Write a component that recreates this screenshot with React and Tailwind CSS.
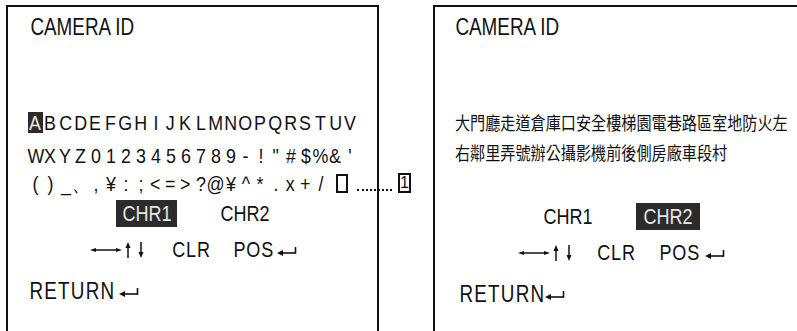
import React from "react";

const ROW1 = "ABCDEFGHIJKLMNOPQRSTUV".split("");
const ROW2 = "WXYZ0123456789-!\"#$%&'".split("");
const ROW3 = ["(", ")", "_", "、", ",", "¥", ":", ";", "<", "=", ">", "?", "@", "¥", "^", "*", ".", "x", "+", "/"];

// OSD font is condensed: squeeze regular Liberation Sans inside a fixed box
const T = ({ w, className = "", children }) => (
  <span className={`${w} flex justify-center shrink-0 ${className}`}>
    <span className="scale-x-[0.82] whitespace-nowrap">{children}</span>
  </span>
);

const Arrows = () => (
  <svg width="56" height="18" viewBox="0 0 56 18" className="shrink-0">
    <line x1="3" y1="9" x2="29" y2="9" stroke="#111" strokeWidth="1.5" />
    <polygon points="0,9 6,7 6,11" fill="#111" />
    <polygon points="32,9 26,7 26,11" fill="#111" />
    <line x1="38" y1="5" x2="38" y2="17" stroke="#111" strokeWidth="1.5" />
    <polygon points="38,1 35.5,7 40.5,7" fill="#111" />
    <line x1="51" y1="1" x2="51" y2="13" stroke="#111" strokeWidth="1.5" />
    <polygon points="51,17 48.5,11 53.5,11" fill="#111" />
  </svg>
);

const Enter = () => (
  <svg width="20" height="12" viewBox="0 0 20 12" className="shrink-0">
    <line x1="4" y1="9" x2="18.5" y2="9" stroke="#111" strokeWidth="1.6" />
    <line x1="18.5" y1="3" x2="18.5" y2="9.8" stroke="#111" strokeWidth="1.6" />
    <polygon points="0,9 6,6 6,12" fill="#111" />
  </svg>
);

const Cell = ({ ch, active }) => (
  <span
    className={
      active
        ? "w-[15px] h-[21px] flex items-center justify-center shrink-0 bg-[#2b2b2b] text-[#e6e6e6]"
        : "w-[15px] h-[21px] flex items-center justify-center shrink-0"
    }
  >
    <span className="scale-x-[0.85]">{ch}</span>
  </span>
);

export default function App() {
  return (
    <div className="w-[797px] h-[331px] overflow-hidden bg-white flex items-start text-[#111] font-['Liberation_Sans',sans-serif]">
      {/* left: latin character set */}
      <section className="ml-[6px] mt-[5px] w-[373px] h-[340px] shrink-0 border-2 border-[#111] flex flex-col">
        <div className="h-[30px] mt-[5px] pl-[22px] flex items-center text-[23px] leading-none">
          <T w="w-[105px]">CAMERA ID</T>
        </div>

        <div className="h-[28px] mt-[66px] pl-[20px] flex items-center text-[21px] leading-none">
          {ROW1.map((c, i) => (
            <Cell key={i} ch={c} active={i === 0} />
          ))}
        </div>
        <div className="h-[28px] mt-[5px] pl-[20px] flex items-center text-[21px] leading-none">
          {ROW2.map((c, i) => (
            <Cell key={i} ch={c} />
          ))}
        </div>
        <div className="h-[28px] pl-[20px] flex items-center text-[21px] leading-none">
          {ROW3.map((c, i) => (
            <Cell key={i} ch={c} />
          ))}
          <span className="ml-[8px] w-[12px] h-[19px] border-2 border-[#111] shrink-0" />
          <span className="ml-[9px] w-[35px] self-end mb-[6px] border-b-2 border-dotted border-[#111] shrink-0" />
          <span className="ml-[6px] w-[13px] h-[20px] border-2 border-[#111] shrink-0 flex items-center justify-center text-[16px]">1</span>
        </div>

        <div className="h-[27px] mt-[3px] pl-[108px] flex items-center text-[22px] leading-none">
          <T w="w-[61px] h-[27px] items-center bg-[#2b2b2b] text-[#e6e6e6]">CHR1</T>
          <T w="w-[51px] ml-[42px]">CHR2</T>
        </div>

        <div className="h-[28px] mt-[9px] pl-[82px] flex items-center text-[22px] leading-none tracking-[1px]">
          <Arrows />
          <T w="w-[38px] ml-[26px]">CLR</T>
          <T w="w-[43px] ml-[22px]">POS</T>
          <span className="ml-[2px] flex"><Enter /></span>
        </div>

        <div className="h-[28px] mt-[13px] pl-[24px] flex items-center text-[23px] leading-none tracking-[1.5px]">
          <T w="w-[81px]">RETURN</T>
          <span className="ml-[6px] flex"><Enter /></span>
        </div>
      </section>

      {/* right: chinese character set */}
      <section className="ml-[54px] mt-[5px] h-[340px] flex-1 border-l-2 border-t-2 border-[#111] flex flex-col">
        <div className="h-[30px] mt-[5px] pl-[20px] flex items-center text-[23px] leading-none">
          <T w="w-[105px]">CAMERA ID</T>
        </div>

        <div className="mt-[66px] pl-[20px] flex flex-col font-['Noto_Sans_CJK_TC',sans-serif] text-[18px] leading-none">
          <div className="h-[28px] flex items-center whitespace-nowrap origin-left scale-x-[0.84]">大門廳走道倉庫口安全樓梯園電巷路區室地防火左</div>
          <div className="h-[28px] mt-[2px] flex items-center whitespace-nowrap origin-left scale-x-[0.84]">右鄰里弄號辦公攝影機前後側房廠車段村</div>
        </div>

        <div className="h-[27px] mt-[37px] pl-[108px] flex items-center text-[22px] leading-none">
          <T w="w-[50px]">CHR1</T>
          <T w="w-[64px] h-[27px] ml-[43px] items-center bg-[#2b2b2b] text-[#e6e6e6]">CHR2</T>
        </div>

        <div className="h-[28px] mt-[9px] pl-[83px] flex items-center text-[22px] leading-none tracking-[1px]">
          <Arrows />
          <T w="w-[37px] ml-[24px]">CLR</T>
          <T w="w-[40px] ml-[25px]">POS</T>
          <span className="ml-[5px] flex"><Enter /></span>
        </div>

        <div className="h-[28px] mt-[13px] pl-[25px] flex items-center text-[23px] leading-none tracking-[1.5px]">
          <T w="w-[85px]">RETURN</T>
          <Enter />
        </div>
      </section>
    </div>
  );
}
